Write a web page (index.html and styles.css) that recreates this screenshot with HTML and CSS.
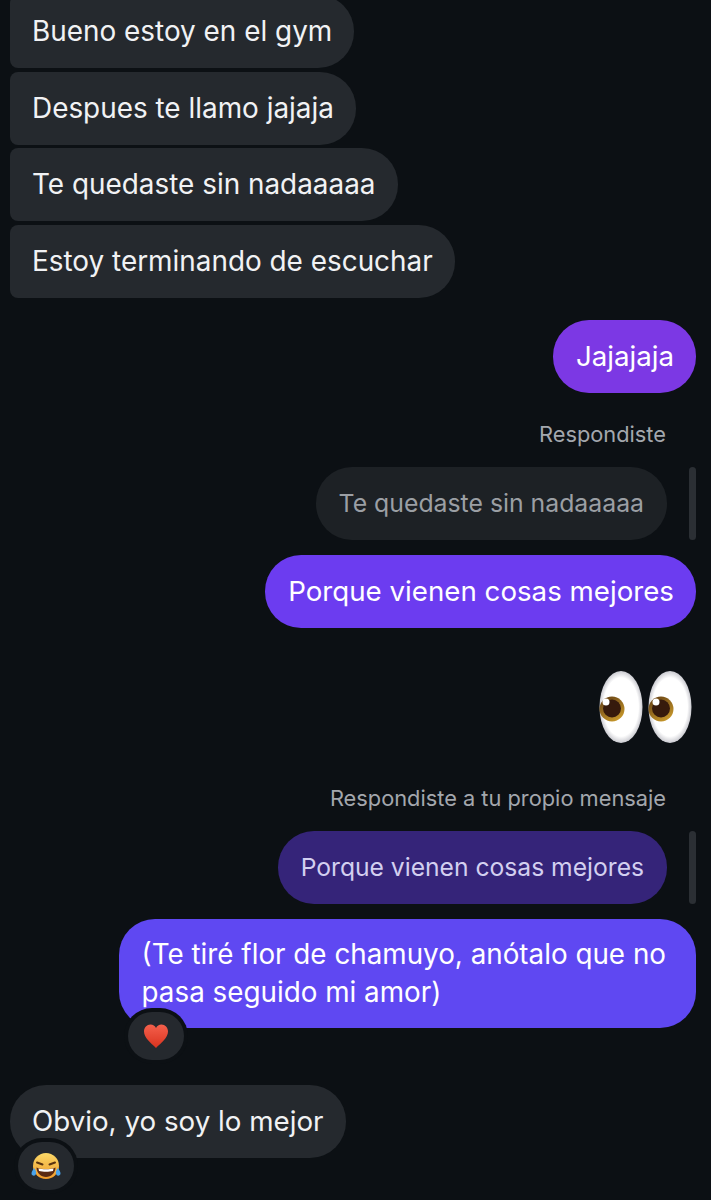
FILE: index.html
```html
<!DOCTYPE html>
<html lang="es">
<head>
    <meta charset="UTF-8">
    <meta name="viewport" content="width=device-width, initial-scale=1.0">
    <title>Chat</title>
    <link rel="stylesheet" href="styles.css">
</head>
<body>
    <div class="chat">
        <div class="group group-in">
            <div class="bubble in">Bueno estoy en el gym</div>
            <div class="bubble in">Despues te llamo jajaja</div>
            <div class="bubble in">Te quedaste sin nadaaaaa</div>
            <div class="bubble in">Estoy terminando de escuchar</div>
        </div>

        <div class="group group-out first-out">
            <div class="bubble out violet">Jajajaja</div>
        </div>

        <div class="reply-label label-one">Respondiste</div>
        <div class="reply-row">
            <div class="bubble quoted">Te quedaste sin nadaaaaa</div>
            <div class="reply-bar"></div>
        </div>
        <div class="group group-out after-reply">
            <div class="bubble out purple">Porque vienen cosas mejores</div>
        </div>

        <div class="eyes">
            <svg width="96" height="74" viewBox="0 0 96 74">
                <defs>
                    <radialGradient id="white" cx="50%" cy="50%" r="52%">
                        <stop offset="78%" stop-color="#ffffff"/>
                        <stop offset="100%" stop-color="#bfbfc6"/>
                    </radialGradient>
                    <linearGradient id="iris" x1="0" y1="0" x2="0.6" y2="1">
                        <stop offset="0%" stop-color="#5e3a12"/>
                        <stop offset="100%" stop-color="#c4952a"/>
                    </linearGradient>
                </defs>
                <ellipse cx="24" cy="37" rx="21.5" ry="36" fill="url(#white)"/>
                <ellipse cx="73" cy="37" rx="21.5" ry="36" fill="url(#white)"/>
                <circle cx="15" cy="39" r="12.500" fill="url(#iris)"/>
                <circle cx="15" cy="38.500" r="9" fill="#361a0c"/>
                <circle cx="9" cy="32" r="3.500" fill="#ffffff"/>
                <circle cx="64" cy="39" r="12.500" fill="url(#iris)"/>
                <circle cx="64" cy="38.500" r="9" fill="#361a0c"/>
                <circle cx="59" cy="32" r="3.500" fill="#ffffff"/>
            </svg>
        </div>

        <div class="reply-label label-two">Respondiste a tu propio mensaje</div>
        <div class="reply-row">
            <div class="bubble quoted own">Porque vienen cosas mejores</div>
            <div class="reply-bar"></div>
        </div>
        <div class="group group-out after-reply">
            <div class="bubble out indigo tall">
                (Te tiré flor de chamuyo, anótalo que no<br>pasa seguido mi amor)
                <div class="reaction reaction-heart">
                    <svg width="26" height="26" viewBox="0 0 26 26">
                        <defs>
                            <linearGradient id="heart" x1="0" y1="0" x2="0" y2="1">
                                <stop offset="0%" stop-color="#f4604c"/>
                                <stop offset="100%" stop-color="#d9331f"/>
                            </linearGradient>
                        </defs>
                        <path d="M13 25C8 20 1 15 1 8.500 1 4.500 4 1.500 7.500 1.500 10 1.500 12 3 13 5 14 3 16 1.500 18.500 1.500 22 1.500 25 4.500 25 8.500 25 15 18 20 13 25Z" fill="url(#heart)"/>
                    </svg>
                </div>
            </div>
        </div>

        <div class="group group-in last-in">
            <div class="bubble in">
                Obvio, yo soy lo mejor
                <div class="reaction reaction-laugh">
                    <svg width="30" height="28" viewBox="0 0 30 28">
                        <defs>
                            <linearGradient id="face" x1="0" y1="0" x2="0" y2="1">
                                <stop offset="0%" stop-color="#fbd968"/>
                                <stop offset="100%" stop-color="#ef9a2a"/>
                            </linearGradient>
                        </defs>
                        <circle cx="15" cy="14" r="13" fill="url(#face)"/>
                        <path d="M6 10.500 11.500 12.500M24 10.500 18.500 12.500" stroke="#5a3410" stroke-width="2" stroke-linecap="round" fill="none"/>
                        <path d="M5.500 15.500C10 17.500 20 17.500 24.500 15.500 24.500 21 20 25 15 25 10 25 5.500 21 5.500 15.500Z" fill="#5a2a12"/>
                        <path d="M7.500 16.500C11 17.600 19 17.600 22.500 16.500L22 19C18 20 12 20 8 19Z" fill="#ffffff"/>
                        <path d="M3 16C5 18 6 21 4.500 23 3 24.500 0.500 23.500 0.500 21.500 0.500 19.500 2 18 3 16Z" fill="#4aa3ea"/>
                        <path d="M27 16C25 18 24 21 25.500 23 27 24.500 29.500 23.500 29.500 21.500 29.500 19.500 28 18 27 16Z" fill="#4aa3ea"/>
                    </svg>
                </div>
            </div>
        </div>
    </div>
</body>
</html>
```

FILE: styles.css
```css
html, body {
    margin: 0;
    height: 1200px;
    overflow: hidden;
    background-color: #0c1014;
}
body {
    font-family: Inter, "Liberation Sans", sans-serif;
}
.chat {
    display: flex;
    flex-direction: column;
    margin-top: -5px;
    padding: 0 15px 0 10px;
}
.group {
    display: flex;
    flex-direction: column;
    gap: 3.6px;
}
.group-in {
    align-items: flex-start;
}
.group-out {
    align-items: flex-end;
}
.bubble {
    position: relative;
    height: 73px;
    line-height: 72px;
    box-sizing: border-box;
    padding: 0 22px;
    border-radius: 36px;
    font-size: 27.9px;
    color: #f1f2f4;
    white-space: nowrap;
}
.in {
    background-color: #25292e;
    border-radius: 8px 36px 36px 8px;
}
.last-in .in {
    font-size: 27.75px;
    border-radius: 36px;
}
.out {
    font-size: 27.7px;
    color: #ffffff;
    padding-left: 23px;
}
.violet {
    background-color: #7c38e4;
}
.purple {
    background-color: #6c3cf0;
}
.indigo {
    background-color: #5f48f2;
}
.tall {
    height: 109px;
    font-size: 27.8px;
    line-height: 38px;
    padding: 16px 30px 0 23px;
    border-radius: 36px;
}
.first-out {
    margin-top: 22px;
}
.reply-label {
    height: 30px;
    line-height: 30px;
    padding-right: 30px;
    text-align: right;
    font-size: 21.8px;
    color: #a3a7ad;
}
.label-one {
    margin-top: 26px;
    margin-bottom: 18px;
}
.label-two {
    margin-top: 39px;
    margin-bottom: 18px;
}
.reply-row {
    display: flex;
    justify-content: flex-end;
    align-items: stretch;
    gap: 22px;
}
.reply-bar {
    width: 7px;
    border-radius: 4px;
    background-color: #2b2f34;
}
.quoted {
    padding: 0 23px;
    line-height: 73px;
    font-size: 24.8px;
    background-color: #1d2125;
    color: #9b9fa4;
}
.quoted.own {
    font-size: 24.65px;
    background-color: #352479;
    color: #d3cff0;
}
.after-reply {
    margin-top: 15px;
}
.eyes {
    display: flex;
    justify-content: flex-end;
    margin-top: 42px;
    padding-right: 3px;
    height: 74px;
}
.reaction {
    position: absolute;
    display: flex;
    align-items: center;
    justify-content: center;
    width: 56px;
    height: 48px;
    border-radius: 24px;
    background-color: #25292e;
    box-shadow: 0 0 0 4px #0c1014;
}
.reaction-heart {
    left: 9px;
    top: 93px;
}
.reaction-laugh {
    left: 8px;
    top: 57px;
}
.last-in {
    margin-top: 57px;
}
```
